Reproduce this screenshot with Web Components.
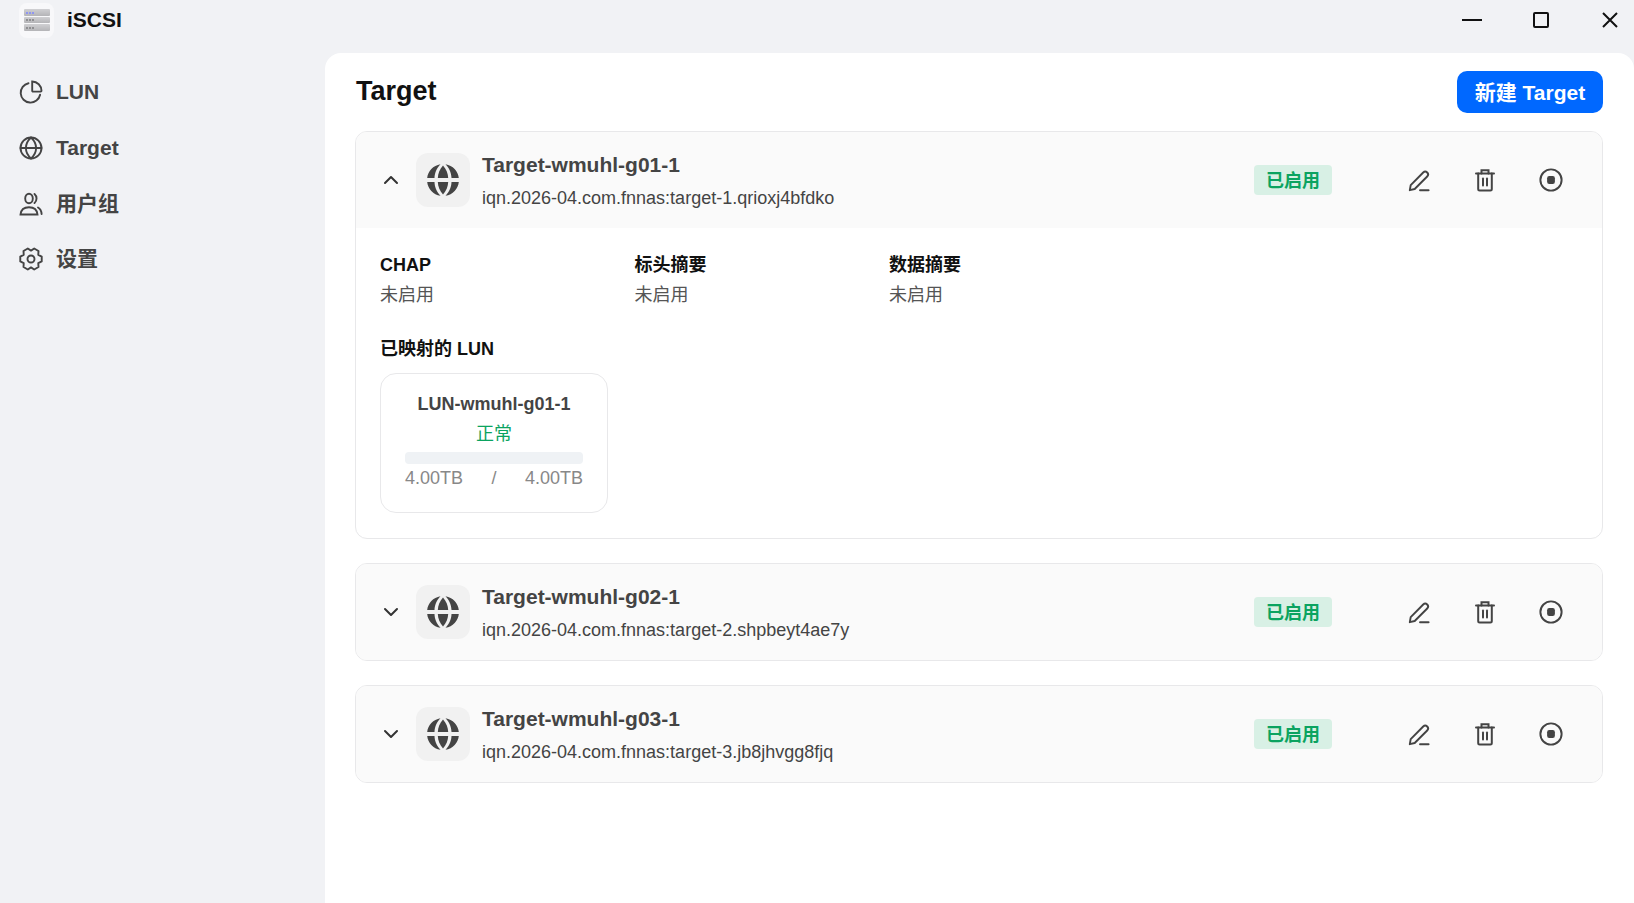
<!DOCTYPE html>
<html lang="zh">
<head>
<meta charset="utf-8">
<title>iSCSI</title>
<style>
  html, body { margin: 0; height: 100%; }
  body {
    background: #f1f2f5;
    font-family: "Liberation Sans", "Noto Sans CJK SC", sans-serif;
    overflow: hidden;
  }
</style>
</head>
<body>
<iscsi-app>
  <nav-item slot="nav" icon="pie">LUN</nav-item>
  <nav-item slot="nav" icon="globe">Target</nav-item>
  <nav-item slot="nav" icon="users">用户组</nav-item>
  <nav-item slot="nav" icon="gear">设置</nav-item>

  <target-card name="Target-wmuhl-g01-1" iqn="iqn.2026-04.com.fnnas:target-1.qrioxj4bfdko" open>
    <detail-field label="CHAP">未启用</detail-field>
    <detail-field label="标头摘要">未启用</detail-field>
    <detail-field label="数据摘要">未启用</detail-field>
    <lun-card slot="luns" name="LUN-wmuhl-g01-1" status="正常" used="4.00TB" total="4.00TB"></lun-card>
  </target-card>
  <target-card name="Target-wmuhl-g02-1" iqn="iqn.2026-04.com.fnnas:target-2.shpbeyt4ae7y"></target-card>
  <target-card name="Target-wmuhl-g03-1" iqn="iqn.2026-04.com.fnnas:target-3.jb8jhvgg8fjq"></target-card>
</iscsi-app>

<script>
  // six rounded teeth, points left and right like the reference
  function gearPath() {
    const pts = [];
    for (let i = 0; i < 6; i++) {
      const a = i * 60;
      [[a - 13, 11], [a + 13, 11], [a + 30, 8.4]].forEach(([deg, r]) => {
        const rad = (deg * Math.PI) / 180;
        pts.push(`${(12 + r * Math.cos(rad)).toFixed(2)} ${(12 + r * Math.sin(rad)).toFixed(2)}`);
      });
    }
    return "M" + pts.join("L") + "z";
  }

  const icons = {
    pie: `<path d="M9.500 3.200a9.800 9.800 0 1 0 11.600 11.600"/><path d="M13.200 1.500a9.400 9.400 0 0 1 9.300 9.300a.8.8 0 0 1-.8.8h-7.700a.8.8 0 0 1-.8-.8z"/>`,
    globe: `<circle cx="12" cy="12" r="10.500"/><path d="M1.500 12h21"/><path d="M12 1.500c-6.800 6.300-6.800 14.700 0 21c6.800-6.300 6.800-14.700 0-21z"/>`,
    users: `<ellipse cx="10" cy="6.500" rx="3.800" ry="4.800"/><path d="M1.500 22.500C2 17.500 5.500 15.200 10 15.200s8 2.300 8.500 7.300z"/><path d="M15.500 2a6 6 0 0 1 0 9"/><path d="M19 15.500c2.200 1.200 3.400 3.500 3.600 6.500"/>`,
    gear: `<circle cx="12" cy="12" r="3.500"/><path d="${gearPath()}" stroke-linejoin="round"/>`,
    edit: `<path d="M2.800 22.200l.9-5L16.200 4.500a2.800 2.800 0 0 1 4 4L7.700 21z" stroke-linejoin="round"/><path d="M13 22.200h8.600"/>`,
    trash: `<path d="M3 5.500h18"/><path d="M8.500 5.500V2.200h7v3.300"/><path d="M5.200 5.500V21a1.500 1.500 0 0 0 1.500 1.500h10.600a1.500 1.500 0 0 0 1.500-1.500V5.500"/><path d="M10 10.500v7"/><path d="M14 10.500v7"/>`,
    stop: `<circle cx="12" cy="12" r="9.800"/><rect x="8.400" y="8.400" width="7.200" height="7.200" rx="2" fill="currentColor" stroke="none"/>`
  };

  function svgIcon(name, size, width) {
    return `<svg width="${size}" height="${size}" viewBox="0 0 24 24" fill="none" stroke="currentColor" stroke-width="${width}" stroke-linecap="round">${icons[name]}</svg>`;
  }

  class IscsiApp extends HTMLElement {
    constructor() {
      super();
      this.attachShadow({ mode: "open" });
      this.shadowRoot.innerHTML = `
        <style>
          :host {
            display: grid;
            grid-template-columns: 325px 1fr;
            grid-template-rows: 53px 1fr;
            height: 903px;
          }
          .title {
            display: flex;
            align-items: center;
            gap: 13px;
            height: 40px;
            padding-left: 19px;
            font-size: 21px;
            font-weight: 700;
            color: #111;
          }
          .logo {
            width: 35px;
            height: 35px;
            border-radius: 8px;
            background: #f8f8fa;
            display: flex;
            flex-direction: column;
            justify-content: center;
            align-items: center;
            gap: 1px;
          }
          .logo i {
            width: 26px;
            height: 6.500px;
            border-radius: 1px;
            display: flex;
            align-items: center;
            gap: 1px;
            padding-left: 2px;
            box-sizing: border-box;
            background: linear-gradient(#d0d0d3, #b4b4b7);
          }
          .logo b { width: 2px; height: 2px; background: #8f8f92; }
          .logo i:first-child b { background: #8f96f2; }
          .controls {
            display: flex;
            justify-content: flex-end;
            align-items: flex-start;
            gap: 21px;
            padding-top: 4px;
            color: #111;
          }
          .controls svg { display: block; }
          .controls span { width: 48px; height: 32px; display: flex; align-items: center; justify-content: center; }
          nav { padding-top: 11.500px; padding-left: 19px; display: flex; flex-direction: column; }
          main {
            background: #fff;
            border-radius: 16px 16px 0 0;
            padding: 18px 31px 0 30px;
          }
          header {
            display: flex;
            justify-content: space-between;
            align-items: center;
            height: 42px;
            margin-bottom: 18px;
          }
          h1 { margin: 0 0 2px 1px; font-size: 27px; font-weight: 700; color: #111; }
          button {
            height: 42px;
            width: 146px;
            padding: 0 0 3px;
            border: 0;
            border-radius: 10px;
            background: #0068ff;
            color: #fff;
            font: 700 21px "Liberation Sans", "Noto Sans CJK SC", sans-serif;
          }
          .list { display: flex; flex-direction: column; gap: 24px; }
        </style>
        <div class="title"><span class="logo"><i><b></b><b></b><b></b></i><i><b></b><b></b><b></b></i><i><b></b><b></b><b></b></i></span>iSCSI</div>
        <div class="controls">
          <span><svg width="20" height="2"><rect width="20" height="2" fill="currentColor"/></svg></span>
          <span><svg width="16" height="16" fill="none" stroke="currentColor" stroke-width="2"><rect x="1" y="1" width="14" height="14" rx="1"/></svg></span>
          <span><svg width="16" height="16" fill="none" stroke="currentColor" stroke-width="2"><path d="M1 1l14 14M15 1L1 15"/></svg></span>
        </div>
        <nav><slot name="nav"></slot></nav>
        <main>
          <header><h1>Target</h1><button>新建 Target</button></header>
          <div class="list"><slot></slot></div>
        </main>`;
    }
  }

  class NavItem extends HTMLElement {
    constructor() {
      super();
      this.attachShadow({ mode: "open" });
      this.shadowRoot.innerHTML = `
        <style>
          :host {
            display: flex;
            align-items: center;
            gap: 13px;
            height: 55.700px;
            font-size: 21px;
            line-height: 24px;
            font-weight: 700;
            color: #444;
          }
          svg { display: block; flex: none; }
        </style>
        ${svgIcon(this.getAttribute("icon"), 24, 1.900)}<slot></slot>`;
    }
  }

  class TargetCard extends HTMLElement {
    constructor() {
      super();
      this.attachShadow({ mode: "open" });
      const open = this.hasAttribute("open");
      this.shadowRoot.innerHTML = `
        <style>
          :host {
            display: block;
            border: 1px solid #e8e8ea;
            border-radius: 12px;
            overflow: hidden;
            background: #fff;
          }
          .head {
            display: flex;
            align-items: center;
            height: 96px;
            background: #fafafa;
            color: #444;
          }
          .chev { width: 24px; margin-left: 23px; margin-right: 13px; display: flex; justify-content: center; color: #333; }
          .avatar {
            width: 54px;
            height: 54px;
            border-radius: 12px;
            background: #f1f1f1;
            display: flex;
            align-items: center;
            justify-content: center;
            margin-right: 12px;
          }
          .info { flex: 1; min-width: 0; padding-top: 2px; }
          .name { font-size: 21px; font-weight: 700; line-height: 24px; color: #444; margin-bottom: 9px; }
          .iqn { font-size: 18px; line-height: 24px; color: #444; }
          .badge {
            width: 78px;
            height: 30px;
            padding-bottom: 3px;
            box-sizing: border-box;
            border-radius: 4px;
            background: #d8f0e5;
            color: #0ba360;
            font-size: 18px;
            font-weight: 700;
            display: flex;
            align-items: center;
            justify-content: center;
            margin-right: 75px;
          }
          .actions { display: flex; align-items: center; margin-right: 38px; color: #444; }
          .actions svg { display: block; }
          .actions svg:nth-child(2) { margin: 0 41px 0 42px; }
          .body { padding: 25px 24px 25px; }
          .fields { display: grid; grid-template-columns: repeat(3, 254.500px); justify-content: start; margin-bottom: 30px; }
          h3 { margin: 0 0 12px; font-size: 18px; line-height: 24px; font-weight: 700; color: #111; }
        </style>
        <div class="head">
          <span class="chev"><svg width="24" height="24" viewBox="0 0 24 24" fill="none" stroke="currentColor" stroke-width="2" stroke-linecap="round" stroke-linejoin="round"><path d="${open ? "M6 15l6-6 6 6" : "M6 9l6 6 6-6"}"/></svg></span>
          <span class="avatar">
            <svg width="34" height="34" viewBox="0 0 34 34" fill="#444">
              <path d="M14.500 1.200C10 6 8.700 10.500 8.500 15H1.200C1.800 8.200 7.200 2.300 14.500 1.200z"/>
              <path d="M19.500 1.200C24 6 25.300 10.500 25.500 15h7.300C32.200 8.200 26.800 2.300 19.500 1.200z"/>
              <path d="M17 2.500C13.600 6.500 12 10.500 11.800 15h10.400C22 10.500 20.400 6.500 17 2.500z"/>
              <path d="M14.500 32.800C10 28 8.700 23.500 8.500 19H1.200c.6 6.800 6 12.700 13.300 13.800z"/>
              <path d="M19.500 32.800C24 28 25.300 23.500 25.500 19h7.300c-.6 6.800-6 12.700-13.300 13.800z"/>
              <path d="M17 31.500C13.600 27.500 12 23.500 11.800 19h10.400C22 23.500 20.400 27.500 17 31.500z"/>
            </svg>
          </span>
          <div class="info">
            <div class="name">${this.getAttribute("name")}</div>
            <div class="iqn">${this.getAttribute("iqn")}</div>
          </div>
          <span class="badge">已启用</span>
          <span class="actions">${svgIcon("edit", 24, 1.900)}${svgIcon("trash", 24, 2)}${svgIcon("stop", 26, 1.800)}</span>
        </div>
        ${open ? `<div class="body">
          <div class="fields"><slot></slot></div>
          <h3>已映射的 LUN</h3>
          <slot name="luns"></slot>
        </div>` : ""}`;
    }
  }

  class DetailField extends HTMLElement {
    constructor() {
      super();
      this.attachShadow({ mode: "open" });
      this.shadowRoot.innerHTML = `
        <style>
          :host { display: block; font-size: 18px; line-height: 24px; color: #555; }
          b { display: block; color: #111; margin-bottom: 6px; }
        </style>
        <b>${this.getAttribute("label")}</b><slot></slot>`;
    }
  }

  class LunCard extends HTMLElement {
    constructor() {
      super();
      this.attachShadow({ mode: "open" });
      this.shadowRoot.innerHTML = `
        <style>
          :host {
            display: block;
            box-sizing: border-box;
            width: 228px;
            height: 140px;
            padding: 18px 24px 0;
            border: 1px solid #e8e8ea;
            border-radius: 16px;
            text-align: center;
            font-size: 18px;
            line-height: 24px;
          }
          .name { font-weight: 700; color: #444; }
          .status { color: #0ba360; margin-top: 6px; }
          .bar { height: 12px; border-radius: 4px; background: #eff2f5; margin-top: 6px; }
          .size { display: flex; justify-content: space-between; color: #888; margin-top: 2px; }
        </style>
        <div class="name">${this.getAttribute("name")}</div>
        <div class="status">${this.getAttribute("status")}</div>
        <div class="bar"></div>
        <div class="size"><span>${this.getAttribute("used")}</span><span>/</span><span>${this.getAttribute("total")}</span></div>`;
    }
  }

  customElements.define("iscsi-app", IscsiApp);
  customElements.define("nav-item", NavItem);
  customElements.define("target-card", TargetCard);
  customElements.define("detail-field", DetailField);
  customElements.define("lun-card", LunCard);
</script>
</body>
</html>
